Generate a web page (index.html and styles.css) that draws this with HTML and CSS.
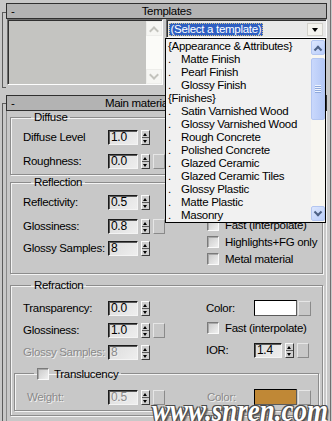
FILE: index.html
```html
<!DOCTYPE html>
<html lang="en">
<head>
  <meta charset="UTF-8" />
  <title>Arch &amp; Design - Templates</title>
<link rel="stylesheet" href="styles.css">
</head>
<body>

<div class="panel">
  <div class="rollout templates">
    <div class="rollout-head"><span class="toggle">-</span><span class="title">Templates</span><span></span></div>
    <div class="templates-body">
      <div class="listbox">
        <div class="list-area"></div>
        <div class="vscroll">
          <span class="sb-btn up"></span>
          <span class="sb-track"></span>
          <span class="sb-btn down"></span>
        </div>
      </div>
      <div class="combo">
        <span class="combo-text"><span class="sel">(Select a template)</span></span>
        <span class="combo-btn"></span>
      </div>
    </div>
  </div>

  <div class="rollout main">
    <div class="rollout-head"><span class="toggle">-</span><span class="title">Main material parameters</span><span></span></div>

    <fieldset class="group diffuse">
      <legend>Diffuse</legend>
      <div class="cols">
        <div class="col">
          <div class="row r1"><span class="lbl">Diffuse Level</span><span class="field">1.0</span><span class="spin"><i></i><i></i></span></div>
          <div class="row r2"><span class="lbl">Roughness:</span><span class="field">0.0</span><span class="spin"><i></i><i></i></span><span class="mapbtn"></span></div>
        </div>
        <div class="col right"></div>
      </div>
    </fieldset>

    <fieldset class="group reflection">
      <legend>Reflection</legend>
      <div class="cols">
        <div class="col">
          <div class="row r1"><span class="lbl">Reflectivity:</span><span class="field">0.5</span><span class="spin"><i></i><i></i></span></div>
          <div class="row r2"><span class="lbl">Glossiness:</span><span class="field">0.8</span><span class="spin"><i></i><i></i></span><span class="mapbtn"></span></div>
          <div class="row r3"><span class="lbl">Glossy Samples:</span><span class="field">8</span><span class="spin"><i></i><i></i></span></div>
        </div>
        <div class="col right">
          <label class="check c1"><span class="box"></span>Fast (interpolate)</label>
          <label class="check c2"><span class="box"></span>Highlights+FG only</label>
          <label class="check c2"><span class="box"></span>Metal material</label>
        </div>
      </div>
    </fieldset>

    <fieldset class="group refraction">
      <legend>Refraction</legend>
      <div class="cols">
        <div class="col">
          <div class="row r1"><span class="lbl">Transparency:</span><span class="field">0.0</span><span class="spin"><i></i><i></i></span></div>
          <div class="row r2"><span class="lbl">Glossiness:</span><span class="field">1.0</span><span class="spin"><i></i><i></i></span><span class="mapbtn"></span></div>
          <div class="row r2 off"><span class="lbl">Glossy Samples:</span><span class="field">8</span><span class="spin"><i></i><i></i></span></div>
        </div>
        <div class="col right">
          <div class="row r1"><span class="lbl">Color:</span><span class="swatch white"></span><span class="mapbtn"></span></div>
          <label class="check c1"><span class="box"></span>Fast (interpolate)</label>
          <div class="row r3"><span class="lbl">IOR:</span><span class="field short">1.4</span><span class="spin"><i></i><i></i></span><span class="mapbtn"></span></div>
        </div>
      </div>

      <fieldset class="group translucency">
        <legend><label class="check"><span class="box"></span>Translucency</label></legend>
        <div class="cols">
          <div class="col">
            <div class="row r1 off"><span class="lbl">Weight:</span><span class="field">0.5</span><span class="spin"><i></i><i></i></span><span class="mapbtn"></span></div>
          </div>
          <div class="col right">
            <div class="row r1 off"><span class="lbl">Color:</span><span class="swatch brown"></span><span class="mapbtn"></span></div>
          </div>
        </div>
      </fieldset>
    </fieldset>
  </div>
</div>

<div class="dropdown">
  <ul class="options">
    <li>{Appearance &amp; Attributes}</li>
    <li><span class="dot">.</span>Matte Finish</li>
    <li><span class="dot">.</span>Pearl Finish</li>
    <li><span class="dot">.</span>Glossy Finish</li>
    <li>{Finishes}</li>
    <li><span class="dot">.</span>Satin Varnished Wood</li>
    <li><span class="dot">.</span>Glossy Varnished Wood</li>
    <li><span class="dot">.</span>Rough Concrete</li>
    <li><span class="dot">.</span>Polished Concrete</li>
    <li><span class="dot">.</span>Glazed Ceramic</li>
    <li><span class="dot">.</span>Glazed Ceramic Tiles</li>
    <li><span class="dot">.</span>Glossy Plastic</li>
    <li><span class="dot">.</span>Matte Plastic</li>
    <li><span class="dot">.</span>Masonry</li>
  </ul>
  <div class="xp-scroll">
    <span class="xp-btn up"></span>
    <span class="xp-track"><span class="xp-thumb"></span></span>
    <span class="xp-btn down"></span>
  </div>
</div>

<div class="watermark">www.snren.com</div>

</body>
</html>
```

FILE: styles.css
```css
* {
  box-sizing: border-box;
}

body {
  margin: 0;
  width: 332px;
  height: 421px;
  overflow: hidden;
  position: relative;
  background: #c8c8c8;
  color: #000;
  font: 11.5px "Liberation Sans", Arial, sans-serif;
  letter-spacing: -0.3px;
}

.panel {
  width: 331px;
  height: 421px;
  overflow: hidden;
  padding: 3px 0 0 6px;
  border-right: 1px solid #707070;
}

/* rollouts */
.rollout {
  position: relative;
  width: 321px;
}

.rollout::before {
  content: '';
  position: absolute;
  left: -4px;
  width: 3px;
  border: 1px solid #5c5c5c;
  border-right: 0;
}

.templates {
  height: 86px;
  margin-bottom: 6px;
}

.templates::before {
  top: 9px;
  bottom: 1px;
}

.main {
  height: 326px;
  border-left: 1px solid #8a8a8a;
  border-right: 1px solid #f2f2f2;
}

.main::before {
  top: 8px;
  bottom: 0;
  left: -5px;
  border-bottom: 0;
}

.rollout-head {
  height: 16px;
  display: grid;
  grid-template-columns: 1fr auto 1fr;
  align-items: center;
  background: #b3b3b3;
  border: 1px solid #303030;
  line-height: 13px;
}

.main .rollout-head {
  margin: 0 -1px;
}

.toggle {
  padding-left: 4px;
}

/* templates */
.templates-body {
  display: flex;
  align-items: flex-start;
}

.listbox {
  margin-left: 1px;
  width: 156px;
  height: 66px;
  display: flex;
  border: 1px solid;
  border-color: #6c6c6c #fdfdfd #fdfdfd #6c6c6c;
  box-shadow: inset 1px 1px 0 #303030;
  background: #c4c4c1;
}

.list-area {
  flex: 1;
}

.vscroll {
  width: 16px;
  margin: 1px 0 0;
  display: flex;
  flex-direction: column;
  background: #fbfbf8;
}

.sb-btn {
  height: 15px;
  border: 1px solid #ededea;
  background: #f6f6f3;
  position: relative;
}

.sb-btn::after,
.xp-btn::after {
  content: '';
  position: absolute;
  left: 50%;
  top: 50%;
  width: 5px;
  height: 5px;
  border: solid #c3c3bd;
  border-width: 2px 0 0 2px;
  transform: translate(-50%, -20%) rotate(45deg);
}

.sb-btn.down::after,
.xp-btn.down::after {
  transform: translate(-50%, -80%) rotate(225deg);
}

.sb-track {
  flex: 1;
}

.combo {
  margin-left: 3px;
  width: 162px;
  height: 19px;
  display: flex;
  align-items: center;
  border: 1px solid;
  border-color: #6c6c6c #fdfdfd #fdfdfd #6c6c6c;
  box-shadow: inset 1px 1px 0 #303030;
  background: #e9e9e9;
  padding: 2px 2px 1px 2px;
}

.combo-text {
  flex: 1;
  white-space: nowrap;
}

.sel {
  display: inline-block;
  height: 13px;
  line-height: 11px;
  background: #2f5fc2;
  color: #fff;
  border: 1px dotted #d8c88a;
  padding: 0 1px;
}

.combo-btn {
  width: 16px;
  height: 13px;
  margin-right: 1px;
  background: #f4f3ee;
  border: 1px solid #d2d1cb;
  position: relative;
}

.combo-btn::after {
  content: '';
  position: absolute;
  left: 4px;
  top: 4px;
  border-style: solid;
  border-width: 4px 3.5px 0;
  border-color: #000 transparent transparent;
}

/* groups */
.group {
  margin: 0 0 0 3px;
  width: 313px;
  padding: 0 0 5px 12px;
  border: 1px solid #8c8c8c;
  box-shadow: inset 1px 1px 0 #f4f4f4, 1px 1px 0 #f4f4f4;
  min-inline-size: 0;
}

.group legend {
  margin-left: 8px;
  padding: 0 3px;
  line-height: 13px;
  height: 13px;
}

.cols {
  display: grid;
  grid-template-columns: 183px 1fr;
}

.col {
  display: flex;
  flex-direction: column;
}

.row {
  display: flex;
  align-items: center;
  height: 16px;
}

.lbl {
  width: 85px;
  flex-shrink: 0;
}

.right .lbl {
  width: 48px;
}

.off .lbl,
.off .field {
  color: #8a8a8a;
  text-shadow: 1px 1px 0 #f0f0f0;
}

.field {
  width: 30px;
  height: 15px;
  line-height: 12px;
  padding-left: 2px;
  border: 1px solid;
  border-color: #1a1a1a #f4f4f4 #f4f4f4 #1a1a1a;
  box-shadow: inset 1px 1px 0 #5a5a5a;
  background: linear-gradient(135deg, #dcdcdc, #eeeeee);
  font-size: 12px;
}

.field.short {
  width: 28px;
}

.spin {
  margin-left: 3px;
  width: 9px;
  height: 15px;
  display: flex;
  flex-direction: column;
  border: 1px solid;
  border-color: #fafafa #3a3a3a #3a3a3a #fafafa;
  background: #cfcfcf;
}

.spin i {
  flex: 1;
  position: relative;
}

.spin i:first-child {
  border-bottom: 1px solid #5a5a5a;
}

.spin i::after {
  content: '';
  position: absolute;
  left: 1px;
  top: 2px;
  border-style: solid;
  border-width: 0 2.5px 3px;
  border-color: transparent transparent #000;
}

.spin i:last-child::after {
  top: 2px;
  border-width: 3px 2.5px 0;
  border-color: #000 transparent transparent;
}

.mapbtn {
  margin-left: 3px;
  width: 12px;
  height: 15px;
  border: 1px solid;
  border-color: #e6e6e6 #8a8a8a #8a8a8a #e6e6e6;
  background: #c8c8c8;
}

.swatch {
  width: 43px;
  height: 16px;
  border: 1px solid;
  border-color: #000 #5a5a5a #5a5a5a #000;
  background: #9a9a9a;
}

.swatch + .mapbtn {
  margin-left: 1px;
  width: 13px;
}

.swatch.white {
  background: #fff;
}

.swatch.brown {
  background: #c08836;
}

.check {
  display: flex;
  align-items: center;
  height: 14px;
  margin-left: 1px;
}

.box {
  width: 12px;
  height: 12px;
  margin-right: 6px;
  border: 1px solid;
  border-color: #7a7a7a #fafafa #fafafa #7a7a7a;
  box-shadow: inset 1px 1px 0 #a8a8a8;
  background: linear-gradient(135deg, #c9c9c9, #f0f0f0);
}

/* diffuse */
.diffuse .row.r1 { margin-top: 5px; }
.diffuse .row.r2 { margin-top: 8px; }

/* reflection */
.reflection {
  margin-top: 1px;
  padding-bottom: 7px;
}
.reflection .row.r1 { margin-top: 5px; }
.reflection .row.r2 { margin-top: 8px; }
.reflection .row.r3 { margin-top: 6px; }
.reflection .check.c1 { margin-top: 29px; }
.reflection .check.c2 { margin-top: 3px; }

/* refraction */
.refraction {
  margin-top: 5px;
  padding-bottom: 4px;
}
.refraction .row.r1 { margin-top: 8px; }
.refraction .row.r2 { margin-top: 6px; }
.refraction .check.c1 { margin-top: 5px; }
.refraction .row.r3 { margin-top: 7px; }

.translucency {
  margin: 7px 0 0 -9px;
  width: 305px;
  padding-bottom: 5px;
}

.translucency legend {
  margin-left: 7px;
}

.translucency .check {
  margin-left: 0;
}

.translucency .box {
  margin-right: 5px;
}

.translucency .cols {
  grid-template-columns: 180px 1fr;
}

.translucency .lbl {
  width: 81px;
}

.translucency .right .lbl {
  width: 47px;
}

.translucency .row.r1 {
  margin-top: 9px;
}

/* dropdown list (overlay) */
.dropdown {
  position: absolute;
  left: 165px;
  top: 38px;
  width: 161px;
  height: 185px;
  display: flex;
  border: 1px solid #000;
  background: #f1f1f1;
}

.options {
  flex: 1;
  margin: 0;
  padding: 1px 0 0 2px;
  list-style: none;
  overflow: hidden;
}

.options li {
  height: 13px;
  line-height: 13px;
  white-space: nowrap;
}

.dot {
  display: inline-block;
  width: 13px;
}

.xp-scroll {
  width: 14px;
  display: flex;
  flex-direction: column;
  background: #f7f6f1;
  padding: 1px 0 1px 0;
}

.xp-btn {
  height: 15px;
  position: relative;
  border: 1px solid #b3c6f1;
  border-radius: 2px;
  background: linear-gradient(135deg, #dde7fd, #b9cdfa);
}

.xp-btn::after {
  border-color: #4d6185;
  width: 4px;
  height: 4px;
}

.xp-track {
  flex: 1;
  padding-top: 3px;
}

.xp-thumb {
  display: block;
  height: 62px;
  border: 1px solid #b3c6f1;
  border-radius: 2px;
  background:
    repeating-linear-gradient(#eef3fe 0 1px, #8fa9dc 1px 2px) 3px 26px / 6px 8px no-repeat,
    linear-gradient(90deg, #c9d8fc, #b4c8f6);
}

/* watermark over the bottom of the panel */
.watermark {
  position: absolute;
  right: 4px;
  bottom: -8px;
  font: italic bold 27px/31px "Liberation Serif", serif;
  letter-spacing: 0;
  color: #fff;
  transform: scaleY(1.15);
  transform-origin: bottom;
  text-shadow: 1px 1px 0 #4a4a4a, -1px -1px 0 #4a4a4a, 1px -1px 0 #4a4a4a, -1px 1px 0 #4a4a4a, 2px 2px 1px #6a6a6a;
}
```
